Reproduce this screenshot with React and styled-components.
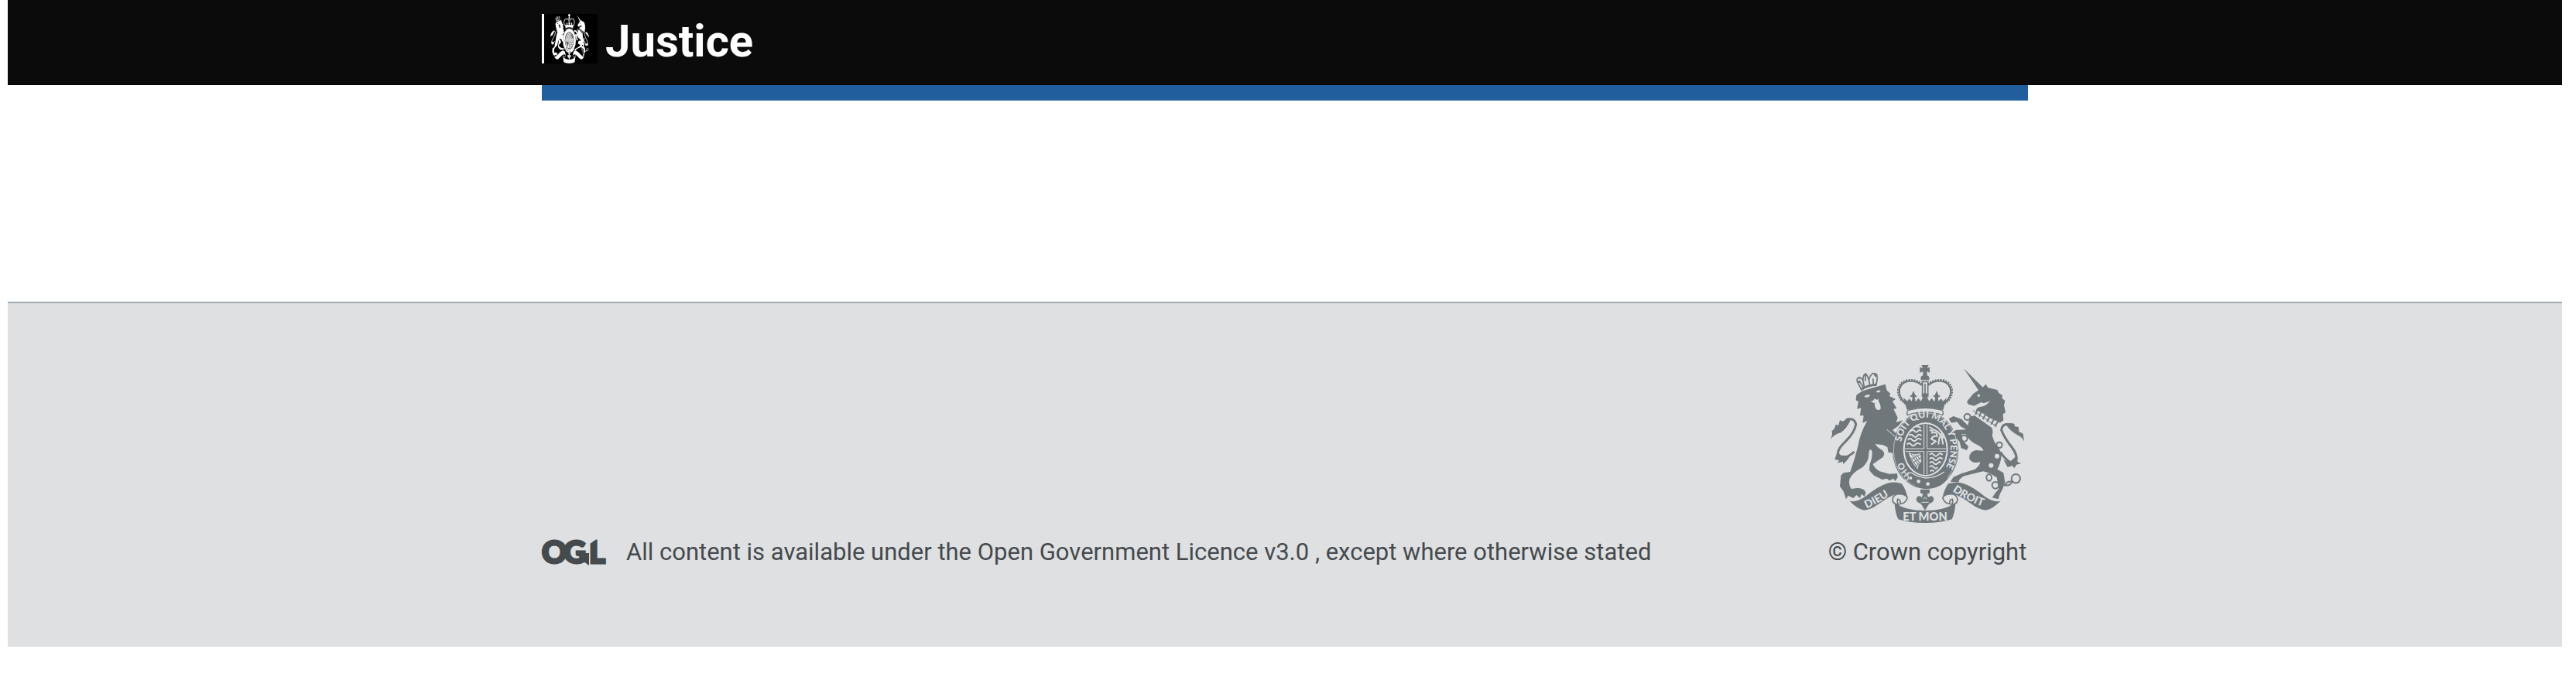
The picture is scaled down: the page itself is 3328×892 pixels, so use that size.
import React from "react";
import styled, { createGlobalStyle } from "styled-components";

const GlobalStyle = createGlobalStyle`
  *, *::before, *::after { box-sizing: border-box; }
  body {
    margin: 0;
    background: #fff;
    color: #454a4c;
    font-family: Roboto, "Liberation Sans", sans-serif;
    font-size: 31px;
    line-height: 40px;
  }
`;

const Page = styled.div`
  padding: 0 18px 0 10px;
`;

const Container = styled.div`
  max-width: 1920px;
  margin: 0 auto;
`;

const Header = styled.header`
  background: #0b0b0b;
  border-bottom: 1px solid #000;
`;

const HeaderInner = styled(Container)`
  display: flex;
  padding: 18px 0 21px;
`;

const HomeLink = styled.a`
  display: flex;
  align-items: flex-start;
  gap: 10px;
  color: #fff;
  text-decoration: none;
`;

const HeaderCrest = styled.span`
  display: flex;
  width: 72px;
  height: 64px;
  padding-left: 8px;
  border-left: 3px solid #fff;
  background: #000;
`;

const Organisation = styled.span`
  font-size: 58px;
  line-height: 70px;
  font-weight: 700;
`;

const BrandBar = styled(Container)`
  height: 20px;
  background: #215e9e;
`;

const Main = styled.main`
  min-height: 260px;
`;

const Footer = styled.footer`
  padding: 80px 0 102px;
  border-top: 2px solid #a1acb2;
  background: #dee0e2;
`;

const FooterInner = styled(Container)`
  display: flex;
  align-items: flex-end;
  justify-content: space-between;
`;

const Licence = styled.div`
  display: flex;
  align-items: center;
  gap: 26px;
`;

const FooterText = styled.p`
  margin: 0;
`;

const FooterLink = styled.a`
  color: inherit;
  text-decoration: none;
`;

const CopyrightLink = styled(FooterLink)`
  display: flex;
  flex-direction: column;
  align-items: center;
  gap: 18px;
  min-width: 260px;
`;

const CrestSvg = styled.svg`
  display: block;
  flex: none;
  color: ${(p) => p.$ink};
  --ground: ${(p) => p.$ground};
  font-family: Lato, "Liberation Sans", sans-serif;
  font-weight: 900;

  .solid { fill: currentColor; }
  .cut { fill: var(--ground); }
  .line { fill: none; stroke: currentColor; }
  .cut-line { fill: none; stroke: var(--ground); }
  .outlined { fill: var(--ground); stroke: currentColor; }
`;

const OglSvg = styled.svg`
  display: block;
  flex: none;
  overflow: visible;
  fill: #454a4c;
  font-family: Lato, "Liberation Sans", sans-serif;
  font-size: 40px;
  font-weight: 900;

  text { stroke: #454a4c; stroke-width: 3px; }
  .slant { fill: #dee0e2; }
`;

function Lion() {
  return (
    <g>
      <path
        className="solid"
        d="M172 182L196 166L284 140L290 164L304 176L300 186L324 198L312 206L328 234L316 236L332 270L326 288L352 280L334 302L312 318Q330 335 344 345L340 372L352 392L342 412L318 408L296 404L292 384L276 376L246 372Q250 384 272 396Q286 410 274 424Q256 436 236 450Q240 464 262 478L300 488L330 486L332 502L322 516L316 506L300 514L290 506L272 510L240 494L222 474L224 450Q236 420 232 398Q222 386 220 410Q220 440 196 462Q160 480 146 506Q140 530 152 546L180 542Q206 546 208 560L204 576L192 566L186 582L172 570L160 582L140 572L132 586L122 556L108 536L112 494L122 484L148 480Q166 430 178 380Q186 330 214 282L196 290L200 262L186 262L190 232L174 236L180 208L170 202Z"
      />
      <path className="outlined" strokeWidth="5" d="M192 162L176 132Q170 118 182 114Q192 114 198 128Q196 108 206 100Q216 106 220 124Q224 104 236 98Q248 98 252 110Q254 122 248 144Q216 146 192 162Z" />
      <path className="line" strokeWidth="5" d="M176 134L186 126M198 128L202 150M220 122L224 144M206 128L208 98M184 130L198 150M236 118L238 140M246 96V112M240 104H254M200 104H214M178 116H190" />
      <path className="line" strokeWidth="7" d="M192 157Q218 144 250 141" />
      <g className="cut">
        <path d="M202 188Q214 176 226 184Q216 196 202 188Z" />
        <path d="M248 170Q256 160 266 166Q262 176 248 170Z" />
        <path d="M226 204Q236 210 242 196Q254 204 258 196L258 206Q266 216 266 236Q258 244 248 236Q240 220 244 212Q236 216 226 204Z" />
      </g>
      <path className="cut-line" d="M290 316L334 354" strokeWidth="3" />
      <path className="solid" d="M72 354Q82 330 76 322Q90 312 92 296L102 300L108 280L120 284L140 270L148 282Q134 312 112 328Q86 334 72 354Z" />
      <path className="line" d="M132 278Q166 268 170 296Q166 326 130 362Q94 396 102 416Q126 436 164 402" strokeWidth="9" />
      <path className="solid" d="M98 402L112 416L148 418Q134 440 120 450L120 440L98 446L106 436L88 432Z" />
    </g>
  );
}

function Unicorn() {
  return (
    <g>
      <path className="solid" d="M588 79L668 158L650 170Z" />
      <path
        className="solid"
        d="M600 208L624 178L650 160L660 154L674 140L682 154L718 162L724 174L738 184L736 194L748 204L744 222L750 250L740 256L742 280L728 290L714 282Q690 274 664 254L636 240Q640 230 652 228Q676 226 690 204Q668 218 656 210L628 224L606 218Z"
      />
      <circle className="cut" cx="646" cy="184" r="5" />
      <path className="line" d="M624 242L716 304" strokeWidth="3" />
      <path className="line" d="M640 240L634 258M656 246L648 266M672 258L662 276M688 268L678 286M704 278L694 296M720 286L708 304" strokeWidth="6" />
      <path
        className="solid"
        d="M612 266L630 262L696 308Q704 322 698 338Q702 356 714 376Q734 398 734 420Q730 450 718 470L742 484L748 520L738 548L728 566L722 586L698 580L712 560L724 546L716 502L690 486L664 478L638 484L590 496Q568 508 568 520L536 518L548 500L580 486L632 470Q650 456 652 442Q620 450 610 430Q606 404 634 396L664 398Q662 386 642 376Q610 362 596 334L580 334L584 358L606 382L600 396L578 388L572 364L546 332L556 318L598 316L576 304L562 286L540 290L530 274L548 264L580 276L604 300Z"
      />
      <g className="line" strokeWidth="6">
        <circle cx="602" cy="267" r="12" />
        <circle cx="590" cy="350" r="12" />
        <circle cx="726" cy="376" r="11" />
        <ellipse cx="686" cy="502" rx="10" ry="13" />
        <circle cx="711" cy="532" r="13" />
        <path d="M746 532Q758 514 776 518Q768 536 746 532Z" />
        <circle cx="790" cy="506" r="17" />
      </g>
      <circle className="cut" cx="717" cy="419" r="9" />
      <circle className="cut" cx="694" cy="455" r="9" />
      <path className="solid" d="M822 362Q816 346 798 338Q772 326 752 298Q766 286 784 294L786 304L800 306L802 324L818 332Z" />
      <path className="line" d="M770 298Q738 288 734 318Q744 346 774 384Q802 420 788 446Q764 452 730 404" strokeWidth="9" />
      <path className="solid" d="M742 432L764 444L790 420L796 440L810 448L792 452L784 466L776 456L758 462Z" />
    </g>
  );
}

function Crown() {
  return (
    <g>
      <path className="solid" d="M424 66L452 66L446 78L456 74L456 96L446 90L446 106Q458 110 454 124L422 124Q418 110 430 106L430 90L418 96L418 74L430 78Z" />
      <path className="line" d="M424 130H452M428 130V190M438 138V180M449 130V190" strokeWidth="5" />
      <g className="line" strokeWidth="6">
        <path d="M426 144Q404 124 372 128Q338 136 338 170Q340 196 364 214" />
        <path d="M450 144Q472 124 504 128Q538 136 538 170Q536 196 512 214" />
      </g>
      <g className="line" strokeWidth="11" strokeDasharray="6 4">
        <path d="M426 142Q404 122 370 126Q335 134 335 170Q338 198 362 214" />
        <path d="M450 142Q472 122 506 126Q541 134 541 170Q538 198 514 214" />
      </g>
      <path
        className="solid"
        d="M354 192L370 206L376 196L386 206L390 192L378 186L386 182L393 166L400 182L408 186L398 192L402 208L412 194L422 206L430 190L424 182L438 172L452 182L446 190L454 206L464 194L474 208L478 192L468 186L476 182L483 166L490 182L498 186L488 192L490 206L500 196L508 206L522 192L508 240Q438 222 368 240Z"
      />
      <path className="outlined" d="M370 260Q364 246 376 240Q438 224 502 240Q512 246 506 260Q438 236 370 260Z" strokeWidth="4" />
    </g>
  );
}

function Shield() {
  return (
    <g>
      <ellipse className="solid" cx="440" cy="396" rx="128" ry="149" />
      <ellipse className="cut-line" cx="440" cy="396" rx="124" ry="145" strokeWidth="2" />
      <ellipse className="cut" cx="440" cy="393" rx="87" ry="105" />
      <ellipse className="solid" cx="440" cy="393" rx="81" ry="99" />
      <g className="cut-line" strokeWidth="6">
        <path d="M376 340q8 -10 16 0t16 0t16 0M372 356q8 -10 16 0t16 0t20 0M384 322q8 -8 14 0t12 0t14 0M368 374q8 -10 16 0t16 0t22 0M400 306q8 -6 22 4" />
        <path d="M454 306L490 326L504 352L508 374M462 330Q486 320 484 342Q470 338 462 352L480 362L462 374M494 344L490 374M456 318L470 322M500 330L510 350" />
        <path d="M456 414q8 -10 16 0t16 0t18 0M456 430q8 -10 16 0t16 0t18 0M456 446q8 -10 16 0t16 0t10 0M456 462q8 -10 16 0t14 0M458 478q8 -8 14 0" />
      </g>
      <path className="cut" d="M374 404Q392 416 420 408L424 440Q410 450 410 470Q384 444 374 404Z" />
      <path className="line" d="M384 410L412 452M394 412L416 444M404 412L420 434M382 424L408 464M420 412L386 430M424 424L392 444M418 440L402 460" strokeWidth="3" />
      <path className="cut-line" d="M434 296V390H360M446 296V390H520M434 490V401H362M446 490V401H518" strokeWidth="3" />
      <path className="solid" d="M368 512Q374 490 400 486L416 500Q450 512 486 492L528 504Q500 546 440 546Q400 540 368 512Z" />
      <path className="cut-line" d="M358 510Q376 520 372 494Q366 480 386 484Q408 500 440 504Q480 504 512 480" strokeWidth="4" />
      <circle className="cut" cx="382" cy="504" r="6" />
      <circle className="cut" cx="413" cy="517" r="7" />
      <circle className="cut" cx="449" cy="527" r="7" />
    </g>
  );
}

function Ribbons() {
  return (
    <g>
      <path className="solid" d="M144 592Q166 602 206 576Q254 536 292 524Q320 516 348 526Q366 552 370 582Q350 562 326 566Q300 574 262 602Q224 630 198 628Q176 624 144 592Z" />
      <path className="solid" d="M732 592Q710 602 670 576Q622 536 584 524Q556 516 528 526Q510 552 506 582Q526 562 550 566Q576 574 614 602Q652 630 678 628Q700 624 732 592Z" />
      <g className="outlined" strokeWidth="5">
        <path d="M370 580Q362 604 342 604Q344 586 332 586Q328 598 336 608Q312 606 312 586Q316 566 338 566Q362 566 370 580Z" />
        <path d="M506 580Q514 604 534 604Q532 586 544 586Q548 598 540 608Q564 606 564 586Q560 566 538 566Q514 566 506 580Z" />
      </g>
      <path className="solid" d="M320 600Q360 630 438 630Q516 630 556 600Q554 640 542 664Q500 678 438 678Q376 678 334 664Q322 640 320 600Z" />
      <path className="solid" d="M420 548H456V562L446 566L450 578Q468 566 472 586Q470 600 456 602L450 610L438 630L426 610L420 602Q406 600 404 586Q408 566 426 578L430 566L420 562Z" />
      <path className="cut-line" d="M424 598H452M432 586Q438 572 444 586" strokeWidth="3" />
    </g>
  );
}

function Mottoes() {
  return (
    <g className="cut">
      <defs>
        <path id="garter-start" d="M380 486A96 114 0 0 1 344 396" />
        <path id="garter" d="M346 364A96 114 0 0 1 536 396A96 114 0 0 1 470 505" />
        <path id="ribbon-left" d="M212 622Q262 600 330 552" />
        <path id="ribbon-right" d="M544 554Q602 596 690 624" />
      </defs>
      <text fontSize="34"><textPath href="#garter-start">HO</textPath></text>
      <text fontSize="36"><textPath href="#garter">SOIT QUI MAL Y PENSE</textPath></text>
      <text fontSize="42"><textPath href="#ribbon-left">DIEU</textPath></text>
      <text fontSize="42"><textPath href="#ribbon-right">DROIT</textPath></text>
      <text fontSize="44" x="438" y="668" textAnchor="middle">ET MON</text>
    </g>
  );
}

function Crest({ width, height, inkColor, groundColor, motto }) {
  return (
    <CrestSvg
      $ink={inkColor}
      $ground={groundColor}
      width={width}
      height={height}
      viewBox="72 66 750 612"
      preserveAspectRatio="none"
      aria-hidden="true"
    >
      <Ribbons />
      <Lion />
      <Unicorn />
      <Shield />
      <Crown />
      {motto && <Mottoes />}
    </CrestSvg>
  );
}

function OglLogo() {
  return (
    <OglSvg width="83" height="34" viewBox="0 0 83 34" role="img" aria-label="Open Government Licence">
      <text x="0 28 61" y="31">OGL</text>
      <path d="M47 18H61V34L54 29Z" />
      <path className="slant" d="M62 -1H72L62 6Z" />
    </OglSvg>
  );
}

export default function App() {
  return (
    <Page>
      <GlobalStyle />
      <Header>
        <HeaderInner>
          <HomeLink href="#home">
            <HeaderCrest>
              <Crest width={50} height={64} inkColor="#fff" groundColor="#000" />
            </HeaderCrest>
            <Organisation>Justice</Organisation>
          </HomeLink>
        </HeaderInner>
      </Header>
      <BrandBar />
      <Main />
      <Footer>
        <FooterInner>
          <Licence>
            <OglLogo />
            <FooterText>
              All content is available under the{" "}
              <FooterLink href="#licence">Open Government Licence v3.0</FooterLink> , except where otherwise stated
            </FooterText>
          </Licence>
          <CopyrightLink href="#copyright">
            <Crest width={250} height={204} inkColor="#6f777b" groundColor="#dee0e2" motto />
            <span>© Crown copyright</span>
          </CopyrightLink>
        </FooterInner>
      </Footer>
    </Page>
  );
}
